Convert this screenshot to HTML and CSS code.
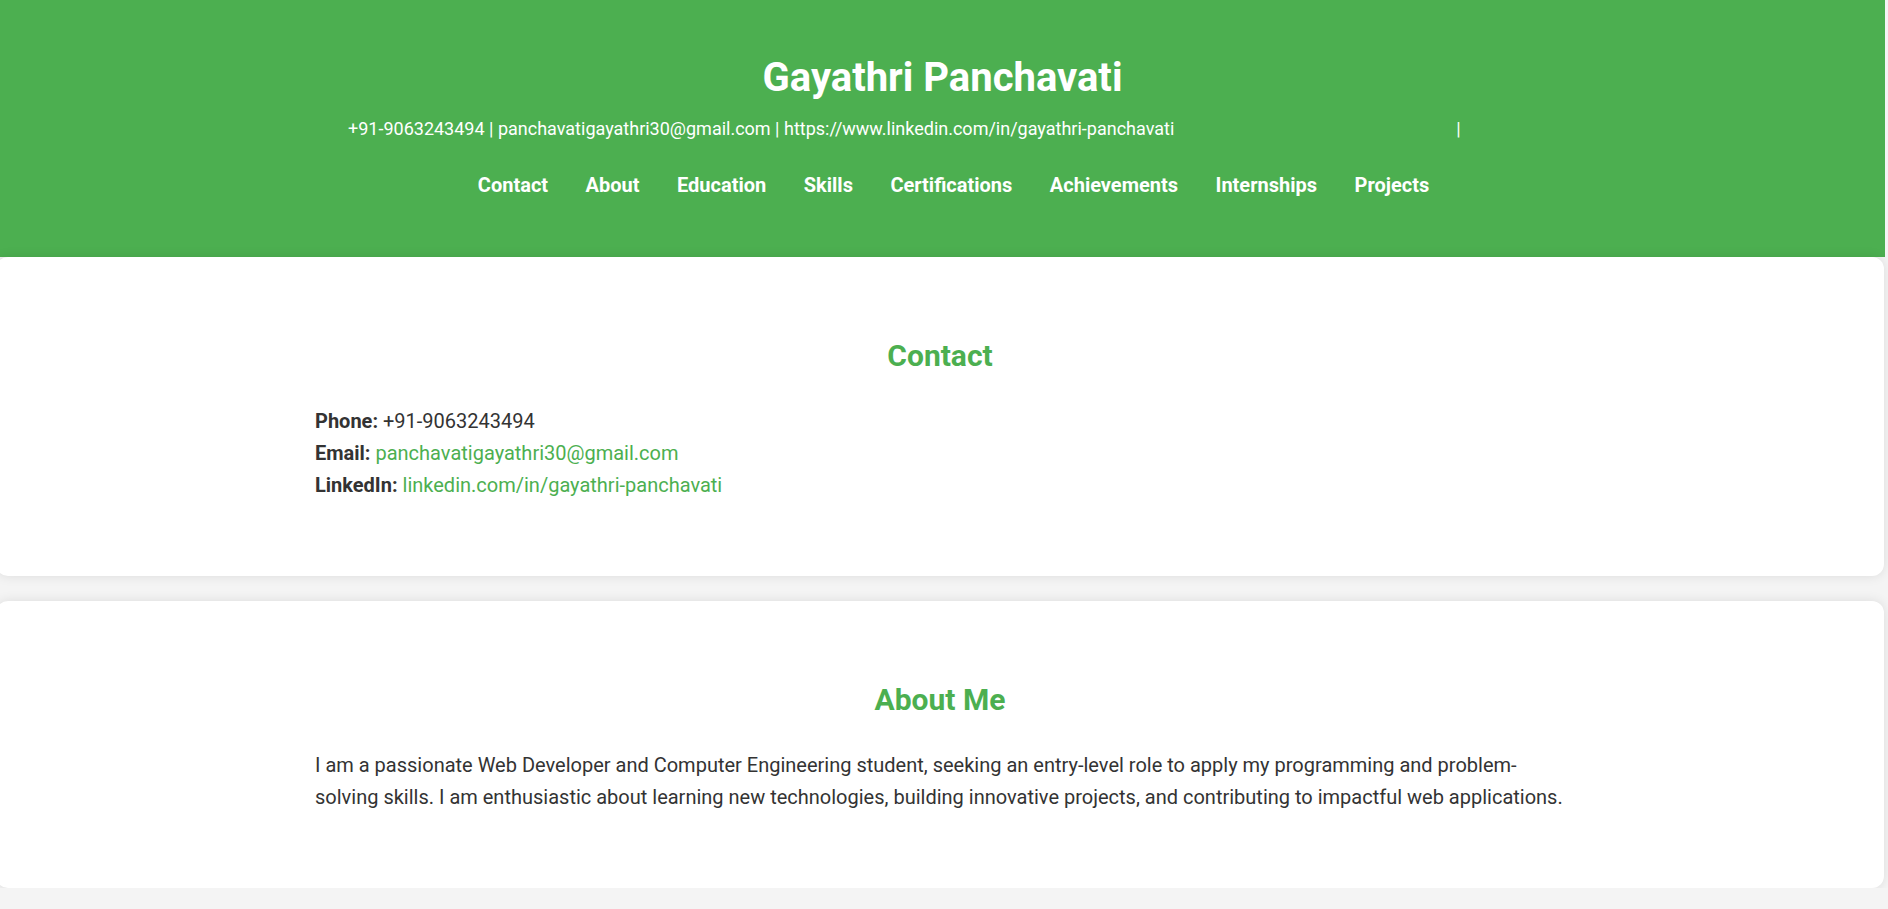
FILE: index.html
```html
<!DOCTYPE html>
<html lang="en">
<head>
<meta charset="utf-8">
<title>Gayathri Panchavati</title>
<link rel="stylesheet" href="styles.css">
</head>
<body>
<header class="site-header">
  <h1 class="name">Gayathri Panchavati</h1>
  <div class="contact-line">
    <span>+91-9063243494 | panchavatigayathri30@gmail.com | https://www.linkedin.com/in/gayathri-panchavati</span><span class="spacer"></span><span>|</span>
  </div>
  <nav class="nav">
    <a href="#contact">Contact</a>
    <a href="#about">About</a>
    <a href="#education">Education</a>
    <a href="#skills">Skills</a>
    <a href="#certifications">Certifications</a>
    <a href="#achievements">Achievements</a>
    <a href="#internships">Internships</a>
    <a href="#projects">Projects</a>
  </nav>
</header>

<section class="card card-first" id="contact">
  <div class="inner">
    <h2 class="section-title">Contact</h2>
    <p class="text">
      <strong>Phone:</strong> +91-9063243494<br>
      <strong>Email:</strong> <a class="link" href="#">panchavatigayathri30@gmail.com</a><br>
      <strong>LinkedIn:</strong> <a class="link" href="#">linkedin.com/in/gayathri-panchavati</a>
    </p>
  </div>
</section>

<section class="card" id="about">
  <div class="inner">
    <h2 class="section-title">About Me</h2>
    <p class="text">I am a passionate Web Developer and Computer Engineering student, seeking an entry-level role to apply my programming and problem-solving skills. I am enthusiastic about learning new technologies, building innovative projects, and contributing to impactful web applications.</p>
  </div>
</section>
</body>
</html>
```

FILE: styles.css
```css
html, body {
  margin: 0;
  padding: 0;
}
body {
  background: #f4f4f4;
  font-family: Roboto, "Liberation Sans", Arial, sans-serif;
  font-size: 20px;
  line-height: 1.6;
  color: #333;
  overflow: hidden;
}
.site-header {
  background: #4caf50;
  color: #fff;
  margin-right: 3px;
  padding: 46px 0 56px;
  text-align: center;
}
.name {
  margin: 0;
  font-size: 40px;
  font-weight: 700;
  line-height: 64px;
}
.contact-line {
  margin-top: 5px;
  font-size: 18px;
  line-height: 28px;
  text-align: left;
  padding-left: 348px;
  white-space: nowrap;
}
.spacer {
  display: inline-block;
  width: 282px;
}
.nav {
  margin-top: 26px;
  display: flex;
  justify-content: center;
  padding-left: 22px;
  gap: 37.5px;
  line-height: 32px;
}
.nav a {
  color: #fff;
  text-decoration: none;
  font-weight: 700;
  font-size: 20px;
}
.card {
  background: #fff;
  border-radius: 12px;
  box-shadow: 0 0 12px rgba(0, 0, 0, 0.1);
  margin: 25px 4px 0 -4px;
  padding: 50px 0;
}
.card-first {
  margin-top: 0;
}
.inner {
  max-width: 1250px;
  margin: 0 auto;
}
.section-title {
  color: #4caf50;
  font-size: 30px;
  font-weight: 700;
  line-height: 48px;
  text-align: center;
  margin: 25px 0;
}
.text {
  margin: 25px 0;
  line-height: 32px;
}
.link {
  color: #4caf50;
  text-decoration: none;
}
```
